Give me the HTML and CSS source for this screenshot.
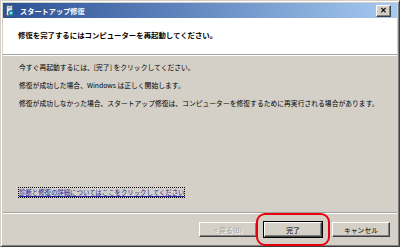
FILE: index.html
```html
<!DOCTYPE html>
<html lang="ja">
<head>
    <meta charset="UTF-8">
    <title>スタートアップ修復</title>
    <link rel="stylesheet" href="styles.css">
</head>
<body>
    <div class="window">
        <div class="titlebar">
            <svg class="app-icon" width="10" height="11" viewBox="0 0 10 11">
                <rect x="1.5" y="0.5" width="6" height="10" fill="#e8eef4" stroke="#5a6a80"/>
                <rect x="2.5" y="1.5" width="4" height="2" fill="#9fb4cc"/>
                <circle cx="6" cy="8" r="2.6" fill="#2aa6c8" stroke="#1a5e86" stroke-width="0.8"/>
                <circle cx="6" cy="8" r="1" fill="#bfeaf5"/>
            </svg>
            <span class="title">スタートアップ修復</span>
            <button class="close-btn">✕</button>
        </div>

        <div class="header">
            <h1>修復を完了するにはコンピューターを再起動してください。</h1>
        </div>

        <div class="content">
            <p>今すぐ再起動するには、[完了] をクリックしてください。</p>
            <p>修復が成功した場合、Windows は正しく開始します。</p>
            <p>修復が成功しなかった場合、スタートアップ修復は、コンピューターを修復するために再実行される場合があります。</p>
            <a class="details" href="#">診断と修復の詳細についてはここをクリックしてください</a>
        </div>

        <div class="footer">
            <button class="btn" disabled>&lt; 戻る(B)</button>
            <div class="finish-wrap">
                <button class="btn default">完了</button>
            </div>
            <button class="btn cancel">キャンセル</button>
        </div>
    </div>
</body>
</html>
```

FILE: styles.css
```css
body {
    margin: 0;
    background: #d4d0c8;
    font-family: "Noto Sans CJK JP", "Noto Sans", sans-serif;
}

.window {
    width: 400px;
    height: 247px;
    box-sizing: border-box;
    border: 1px solid;
    border-color: #d4d0c8 #404040 #404040 #d4d0c8;
    box-shadow: inset 1px 1px #ffffff, inset -1px -1px #808080;
    padding: 2px;
    display: flex;
    flex-direction: column;
}

.titlebar {
    height: 15px;
    display: flex;
    align-items: center;
    padding: 0 2px 0 2px;
    background: linear-gradient(to right, #2c5194, #5f84bd 45%, #a6caf0);
}

.app-icon {
    margin-right: 5px;
}

.title {
    color: #fff;
    font-weight: bold;
    font-size: 7.2px;
    flex: 1;
}

.close-btn {
    width: 15px;
    height: 12px;
    padding: 0;
    margin-right: 4px;
    font-size: 8px;
    font-weight: bold;
    line-height: 10px;
    background: #d4d0c8;
    border: 1px solid;
    border-color: #fff #404040 #404040 #fff;
    box-shadow: inset -1px -1px #808080;
    color: #000;
}

.header {
    background: #fff;
    height: 36px;
    border-bottom: 1px solid #a0a0a0;
    box-shadow: 0 1px #ffffff;
    padding: 0 15px;
    display: flex;
    align-items: center;
}

h1 {
    margin: 0 0 4px 0;
    font-size: 7.4px;
    font-weight: bold;
    color: #000;
}

.content {
    flex: 1;
    padding: 7px 16px 0 16px;
    border-bottom: 1px solid #a0a0a0;
    box-shadow: 0 1px #ffffff;
}

.content p {
    margin: 0 0 8px 0;
    font-size: 6.8px;
    line-height: 10px;
    color: #000;
}

.details {
    display: inline-block;
    margin-top: 72px;
    font-size: 6.4px;
    line-height: 9px;
    color: #1c1ca0;
    outline: 1px dotted #000;
    text-decoration: underline;
}

.footer {
    height: 29px;
    display: flex;
    align-items: center;
    justify-content: flex-end;
    padding: 2px 7px 0 0;
    gap: 7px;
}

.btn {
    width: 58px;
    height: 15px;
    padding: 0;
    font-family: inherit;
    font-size: 6.8px;
    background: #d4d0c8;
    color: #000;
    border: 1px solid;
    border-color: #fff #404040 #404040 #fff;
    box-shadow: inset -1px -1px #808080;
}

.btn:disabled {
    color: #a0a0a0;
    text-shadow: 1px 1px #fff;
}

.btn.default {
    outline: 1px solid #000;
}

.btn.cancel {
    margin-left: 3px;
}

.finish-wrap {
    position: relative;
    display: flex;
}

.finish-wrap::after {
    content: "";
    position: absolute;
    left: -8px;
    right: -8px;
    top: -9px;
    bottom: -9px;
    border: 2px solid #e8000c;
    border-radius: 9px;
}
```
